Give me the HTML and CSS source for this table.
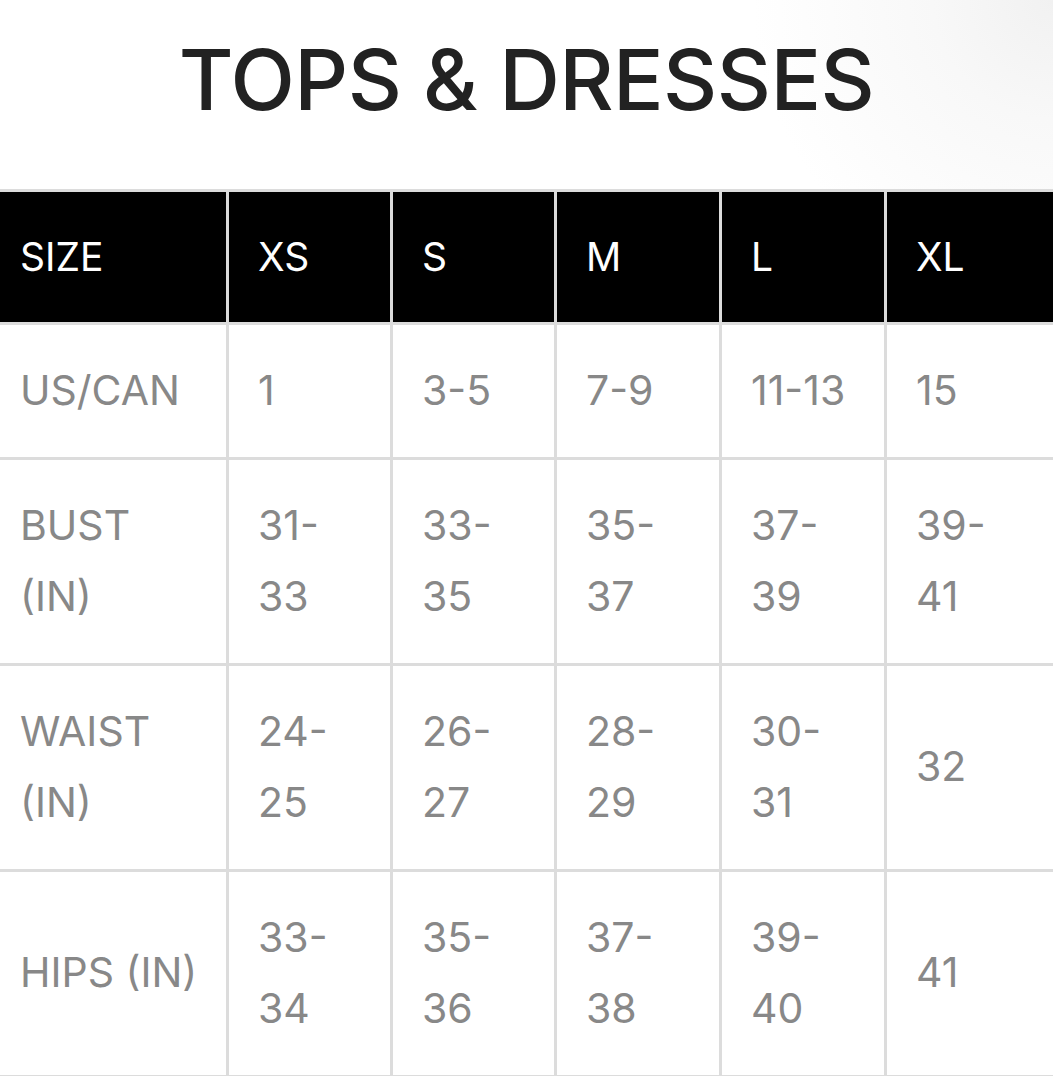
FILE: index.html
```html
<!DOCTYPE html>
<html lang="en">
<head>
<meta charset="utf-8">
<title>Tops &amp; Dresses size chart</title>
<link rel="stylesheet" href="styles.css">
</head>
<body>
<header class="banner">
  <h1 class="title">TOPS &amp; DRESSES</h1>
</header>
<div class="chart">
  <div class="cell head first">SIZE</div>
  <div class="cell head">XS</div>
  <div class="cell head">S</div>
  <div class="cell head">M</div>
  <div class="cell head">L</div>
  <div class="cell head">XL</div>

  <div class="cell first">US/CAN</div>
  <div class="cell">1</div>
  <div class="cell">3-5</div>
  <div class="cell">7-9</div>
  <div class="cell">11-13</div>
  <div class="cell">15</div>

  <div class="cell first">BUST<br>(IN)</div>
  <div class="cell">31-<br>33</div>
  <div class="cell">33-<br>35</div>
  <div class="cell">35-<br>37</div>
  <div class="cell">37-<br>39</div>
  <div class="cell">39-<br>41</div>

  <div class="cell first">WAIST<br>(IN)</div>
  <div class="cell">24-<br>25</div>
  <div class="cell">26-<br>27</div>
  <div class="cell">28-<br>29</div>
  <div class="cell">30-<br>31</div>
  <div class="cell">32</div>

  <div class="cell first">HIPS (IN)</div>
  <div class="cell">33-<br>34</div>
  <div class="cell">35-<br>36</div>
  <div class="cell">37-<br>38</div>
  <div class="cell">39-<br>40</div>
  <div class="cell">41</div>
</div>
</body>
</html>
```
FILE: styles.css
```css
html, body {
  margin: 0;
  padding: 0;
  background: #ffffff;
}
body {
  font-family: Inter, "Liberation Sans", sans-serif;
  overflow: hidden;
}
.banner {
  height: 189px;
  display: flex;
  align-items: center;
  justify-content: center;
  background: radial-gradient(circle at 100% 0, #f1f1f1 0, #f8f8f8 120px, #ffffff 300px);
}
.title {
  margin: 0;
  padding-bottom: 30px;
  font-size: 84px;
  font-weight: 500;
  letter-spacing: -0.6px;
  color: #222222;
  line-height: 1;
}
.chart {
  display: grid;
  grid-template-columns: 226px 161px 161px 162px 162px 1fr;
  gap: 3px;
  background: #dcdcdc;
  border-top: 3px solid #dcdcdc;
  border-bottom: 3px solid #dcdcdc;
}
.cell {
  background: #ffffff;
  color: #888888;
  font-size: 41px;
  font-weight: 400;
  line-height: 71.5px;
  padding: 30px 10px 30px 29px;
  display: flex;
  align-items: center;
  white-space: nowrap;
}
.cell.first {
  padding-left: 20px;
}
.cell.head {
  background: #000000;
  color: #ffffff;
  font-size: 39px;
  line-height: 70px;
}
```
